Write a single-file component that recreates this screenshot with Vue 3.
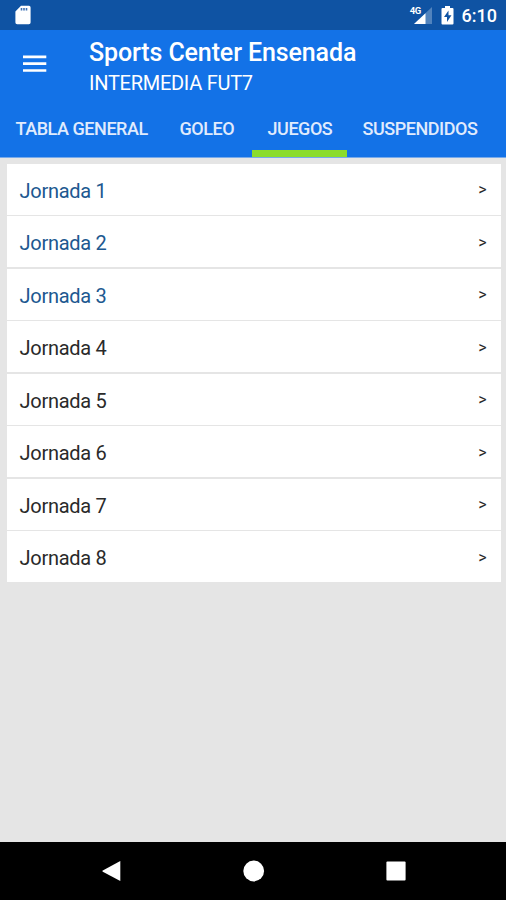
<script setup>
import { ref } from 'vue'

const tabs = [
  { id: 'tabla', label: 'TABLA GENERAL' },
  { id: 'goleo', label: 'GOLEO' },
  { id: 'juegos', label: 'JUEGOS' },
  { id: 'suspendidos', label: 'SUSPENDIDOS' },
]
const active = ref('juegos')
const rounds = Array.from({ length: 8 }, (_, i) => ({ n: i + 1, played: i < 3 }))
</script>

<template>
  <div class="screen">
    <div class="status">
      <svg class="sd" width="16" height="20" viewBox="0 0 16 20">
        <path d="M6 .8h8q1.600 0 1.600 1.600v15q0 1.800-1.800 1.800H2.200Q.4 19.200.4 17.400V6.500z" fill="#fff" />
        <path d="M6.500 3v2.500M9 3v2.500M11.500 3v2.500" stroke="#3f72b4" stroke-width="1.600" />
      </svg>
      <div class="indicators">
        <div class="network">
          <span class="lte">4G</span>
          <svg width="18" height="17" viewBox="0 0 18 17">
            <path d="M18 0v17H0z" fill="#5183bd" />
            <path d="M11.500 6.200V17H0z" fill="#fff" />
          </svg>
        </div>
        <svg class="battery" width="13" height="19" viewBox="0 0 13 19">
          <path d="M4 0h5v2h2.500q1 0 1 1v14.500q0 1-1 1h-10q-1 0-1-1V3q0-1 1-1H4z" fill="#fff" />
          <path d="M7.500 4.500 3 11h3v5l4.500-6.800H7.500z" fill="#0f53a3" />
        </svg>
        <span class="clock">6:10</span>
      </div>
    </div>

    <header class="appbar">
      <div class="heading">
        <svg class="menu" width="24" height="18" viewBox="0 0 24 18">
          <path d="M0 1.900h23.300M0 8.700h23.300M0 15.500h23.300" stroke="#fff" stroke-width="2.700" />
        </svg>
        <div class="titles">
          <h1>Sports Center Ensenada</h1>
          <p>INTERMEDIA FUT7</p>
        </div>
      </div>
      <nav class="tabs">
        <button
          v-for="t in tabs"
          :key="t.id"
          :class="['tab', t.id, { active: active === t.id }]"
          @click="active = t.id"
        ><span>{{ t.label }}</span></button>
      </nav>
    </header>

    <main class="content">
      <ul class="rounds">
        <li v-for="r in rounds" :key="r.n" :class="{ played: r.played }">
          <span class="name">Jornada {{ r.n }}</span>
          <span class="go">&gt;</span>
        </li>
      </ul>
    </main>

    <footer class="navbar">
      <svg width="20" height="22" viewBox="0 0 20 22">
        <path d="M18.300 1v20L.8 11.700q-.9-.6 0-1.200z" fill="#fff" />
      </svg>
      <svg width="22" height="22" viewBox="0 0 22 22"><circle cx="10.700" cy="11" r="10.400" fill="#fff" /></svg>
      <svg width="20" height="20" viewBox="0 0 20 20"><rect x=".4" y=".4" width="19.200" height="19.200" rx="1" fill="#fff" /></svg>
    </footer>
  </div>
</template>

<style>
body {
  margin: 0;
}
</style>

<style scoped>
.screen {
  width: 506px;
  height: 900px;
  display: flex;
  flex-direction: column;
  background: #e5e5e5;
  font-family: Roboto, sans-serif;
  overflow: hidden;
}
.status {
  height: 30px;
  flex: none;
  box-sizing: border-box;
  padding: 0 9px 0 15px;
  display: flex;
  justify-content: space-between;
  background: #0f53a3;
  color: #fff;
}
.sd {
  margin-top: 5px;
}
.indicators {
  display: flex;
  align-items: flex-start;
}
.network {
  display: flex;
  padding-top: 7px;
}
.lte {
  font-size: 9.500px;
  line-height: 8px;
  font-weight: 700;
  letter-spacing: -0.6px;
  margin-right: -7px;
  z-index: 1;
}
.battery {
  margin: 6px 8px 0 9px;
}
.clock {
  font-size: 18px;
  line-height: 32px;
  font-weight: 500;
}
.appbar {
  flex: none;
  height: 128px;
  box-sizing: border-box;
  display: flex;
  flex-direction: column;
  background: #1372e7;
  border-bottom: 1px solid #78aaea;
  color: #fff;
}
.heading {
  display: flex;
  height: 71px;
  padding-left: 23px;
}
.menu {
  margin-top: 25px;
  flex: none;
}
.titles {
  margin-left: 42px;
  white-space: nowrap;
}
h1 {
  margin: 8px 0 0;
  font-size: 25px;
  line-height: 30px;
  font-weight: 500;
  letter-spacing: -0.12px;
}
p {
  margin: 2px 0 0;
  font-size: 20px;
  line-height: 26px;
  letter-spacing: -0.27px;
}
.tabs {
  display: flex;
  flex: 1;
}
.tab {
  flex: none;
  box-sizing: border-box;
  height: 56px;
  padding: 7px 0 0 15.500px;
  border: 0;
  border-bottom: 7px solid transparent;
  background: none;
  color: #e0ebfd;
  font: 500 18px/42px Roboto, sans-serif;
  letter-spacing: -0.45px;
  text-align: left;
  white-space: nowrap;
}
.tabla { width: 164px; }
.goleo { width: 88px; }
.juegos { width: 95px; }
.suspendidos { width: 159px; }
.tab.active {
  border-bottom-color: #8bdc2c;
}
.content {
  flex: 1;
  padding: 6px 5px 0 6.500px;
}
.rounds {
  list-style: none;
  margin: 0;
  padding: 0;
  display: grid;
  gap: 1.900px;
}
li {
  box-sizing: border-box;
  height: 50.600px;
  padding: 0 14.500px 0 13px;
  display: flex;
  justify-content: space-between;
  align-items: center;
  background: #fff;
  color: #2a2a2a;
}
li.played .name {
  color: #205890;
}
.name {
  font-size: 20px;
  line-height: 24px;
  padding-top: 3px;
  letter-spacing: -0.28px;
}
.go {
  font-size: 16px;
  line-height: 20px;
  padding-top: 2px;
}
.navbar {
  flex: none;
  height: 58px;
  box-sizing: border-box;
  padding: 0 100px 0 102px;
  display: flex;
  justify-content: space-between;
  align-items: center;
  background: #000;
}
</style>
